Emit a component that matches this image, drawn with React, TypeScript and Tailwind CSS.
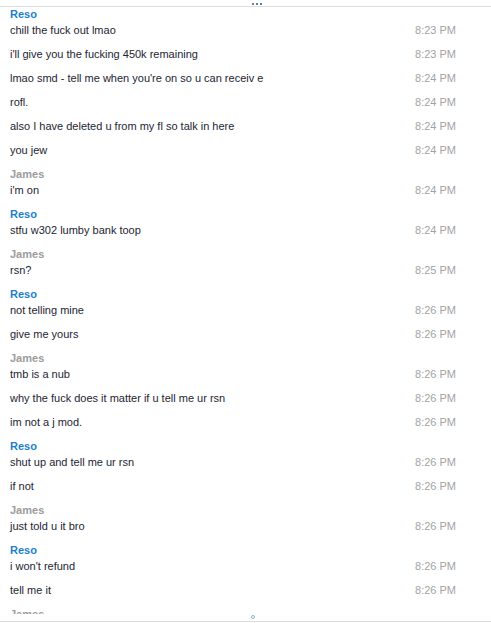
import React from "react";

type Group = { name: string; msgs: [string, string][] };

const groups: Group[] = [
  {
    name: "Reso",
    msgs: [
      ["chill the fuck out lmao", "8:23 PM"],
      ["i'll give you the fucking 450k remaining", "8:23 PM"],
      ["lmao smd - tell me when you're on so u can receiv e", "8:24 PM"],
      ["rofl.", "8:24 PM"],
      ["also I have deleted u from my fl so talk in here", "8:24 PM"],
      ["you jew", "8:24 PM"],
    ],
  },
  { name: "James", msgs: [["i'm on", "8:24 PM"]] },
  { name: "Reso", msgs: [["stfu w302 lumby bank toop", "8:24 PM"]] },
  { name: "James", msgs: [["rsn?", "8:25 PM"]] },
  {
    name: "Reso",
    msgs: [
      ["not telling mine", "8:26 PM"],
      ["give me yours", "8:26 PM"],
    ],
  },
  {
    name: "James",
    msgs: [
      ["tmb is a nub", "8:26 PM"],
      ["why the fuck does it matter if u tell me ur rsn", "8:26 PM"],
      ["im not a j mod.", "8:26 PM"],
    ],
  },
  {
    name: "Reso",
    msgs: [
      ["shut up and tell me ur rsn", "8:26 PM"],
      ["if not", "8:26 PM"],
    ],
  },
  { name: "James", msgs: [["just told u it bro", "8:26 PM"]] },
  {
    name: "Reso",
    msgs: [
      ["i won't refund", "8:26 PM"],
      ["tell me it", "8:26 PM"],
    ],
  },
  { name: "James", msgs: [] },
];

export default function App() {
  return (
    <div
      className="w-[491px] h-[623px] bg-white flex flex-col overflow-hidden text-[11px]"
      style={{ fontFamily: "'Liberation Sans', Arial, sans-serif" }}
    >
      <div className="h-[6px] flex justify-center items-end gap-[2px] pb-[1px] pl-[23px]">
        <div className="w-[2px] h-[2px] bg-[#5b80aa]" />
        <div className="w-[2px] h-[2px] bg-[#5b80aa]" />
        <div className="w-[2px] h-[2px] bg-[#5b80aa]" />
      </div>
      <div className="h-px bg-[#dcdcdc]" />
      <div className="h-[607px] overflow-hidden flex flex-col">
        {groups.map((g, i) => (
          <div key={i} className="flex flex-col">
            <div
              className={`h-[16px] leading-[14px] pl-[10px] font-bold ${
                g.name === "Reso" ? "text-[#1a7fcf]" : "text-[#9b9b9b]"
              }`}
            >
              {g.name}
            </div>
            {g.msgs.map(([m, t], j) => (
              <div key={j} className="h-[24px] leading-[14px] flex pl-[10px] pr-[35px]">
                <span className="flex-1 text-[#222533]">{m}</span>
                <span className="text-[#a3a3a3]">{t}</span>
              </div>
            ))}
          </div>
        ))}
      </div>
      <div className="flex-1 flex justify-center items-start pt-[1px] pl-[15px]">
        <div className="w-[4px] h-[4px] rounded-full border border-[#86b3d9]" />
      </div>
      <div className="h-px bg-[#dcdcdc]" />
      <div className="h-px" />
    </div>
  );
}
